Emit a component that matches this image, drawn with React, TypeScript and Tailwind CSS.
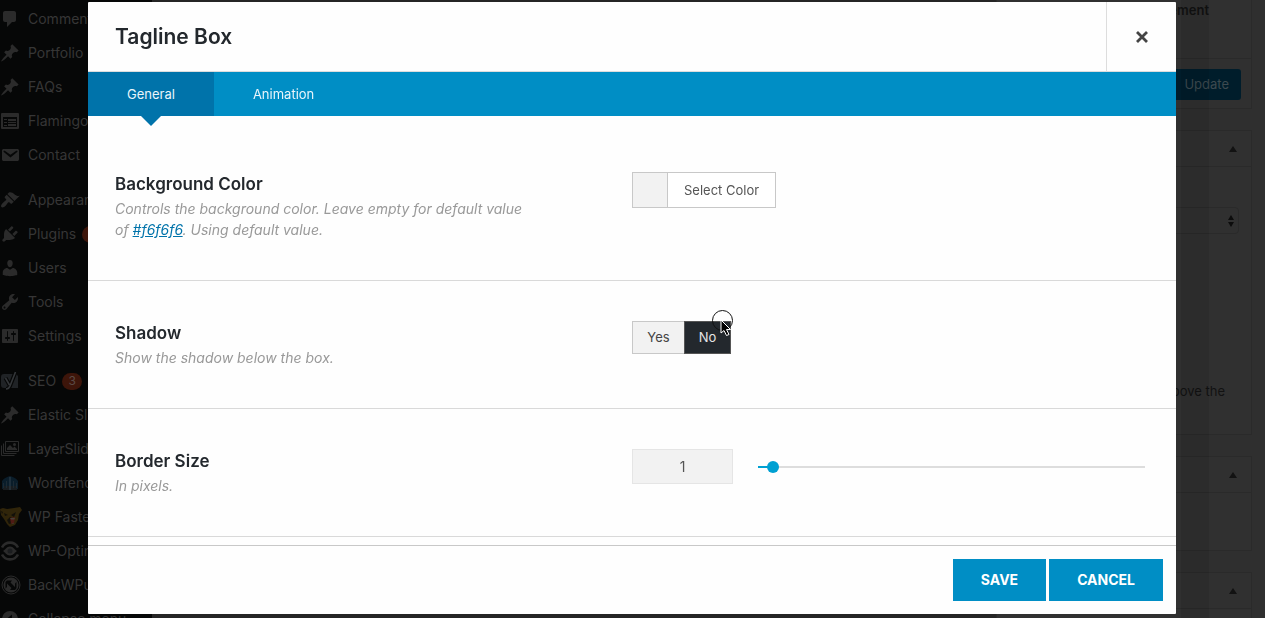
import { useState } from "react";
import type { ReactNode } from "react";
import clsx from "clsx";

const PIN =
  "M10.44 3.02l1.82-1.82 6.36 6.35-1.83 1.82c-1.05-.68-2.48-.57-3.41.36l-.75.75c-.92.93-1.04 2.35-.35 3.41l-1.83 1.82-2.41-2.41-2.8 2.79c-.42.42-3.38 2.71-3.8 2.29s1.86-3.39 2.28-3.81l2.79-2.79L4.1 9.36l1.83-1.82c1.05.69 2.48.57 3.4-.36l.75-.75c.93-.92 1.05-2.35.36-3.41z";

const pin = <path d={PIN} />;

type MenuItem = { label: string; icon: ReactNode; badge?: string };

const menuGroups: MenuItem[][] = [
  [
    {
      label: "Comments",
      icon: <path d="M5 2h9c1.1 0 2 .9 2 2v7c0 1.1-.9 2-2 2h-2l-5 5v-5H5c-1.1 0-2-.9-2-2V4c0-1.1.9-2 2-2z" />,
    },
    { label: "Portfolio", icon: pin },
    { label: "FAQs", icon: pin },
    {
      label: "Flamingo",
      icon: (
        <path
          fillRule="evenodd"
          d="M2 2h16a1 1 0 0 1 1 1v14a1 1 0 0 1-1 1H2a1 1 0 0 1-1-1V3a1 1 0 0 1 1-1zm1 4v10h14V6H3zm1 2h3v1H4V8zm4 0h8v2H8V8zm-4 3h3v1H4v-1zm4 0h8v1H8v-1zm-4 3h3v1H4v-1zm4-1h8v2H8v-2z"
        />
      ),
    },
    {
      label: "Contact",
      icon: (
        <path d="M3.87 4h13.25C18.37 4 19 4.59 19 5.79v8.42c0 1.19-.63 1.79-1.88 1.79H3.87c-1.25 0-1.88-.6-1.88-1.79V5.79c0-1.2.63-1.79 1.88-1.79zm6.62 8.6l6.74-5.53c.24-.2.43-.66.13-1.07-.29-.41-.82-.42-1.17-.17l-5.7 3.86L4.8 5.83c-.35-.25-.88-.24-1.17.17-.3.41-.11.87.13 1.07z" />
      ),
    },
  ],
  [
    {
      label: "Appearance",
      icon: (
        <path d="M14.48 11.06L7.41 3.99l1.5-1.5c.5-.56 2.3-.47 3.51.32 1.21.8 1.43 1.28 2.91 2.1 1.18.64 2.45 1.26 4.45.85zm-.71.71L6.7 4.7 4.93 6.47c-.39.39-.39 1.02 0 1.41l1.06 1.06c.39.39.39 1.03 0 1.42-.6.6-1.43 1.11-2.21 1.69-.35.26-.7.53-1.01.84C1.43 14.23.4 16.08 1.4 17.07c.99 1 2.84-.03 4.18-1.36.31-.31.58-.66.85-1.02.57-.78 1.08-1.61 1.69-2.21.39-.39 1.02-.39 1.41 0l1.06 1.06c.39.39 1.02.39 1.41 0z" />
      ),
    },
    {
      label: "Plugins",
      badge: "5",
      icon: (
        <path d="M13.11 4.36L9.87 7.6 8 5.73l3.24-3.24c.35-.34 1.05-.2 1.56.32.52.51.66 1.21.31 1.55zm-8 1.77l.91-1.12 9.01 9.01-1.19.84c-.71.71-2.63 1.16-3.82 1.16H6.14L4.9 17.26c-.59.59-1.54.59-2.12 0-.59-.58-.59-1.53 0-2.12l1.24-1.24v-3.88c0-1.13.4-3.19 1.09-3.89zm7.26 3.97l3.24-3.24c.34-.35 1.04-.21 1.55.31.52.51.66 1.21.31 1.55l-3.24 3.25z" />
      ),
    },
    {
      label: "Users",
      icon: (
        <path d="M10 9.25c-2.27 0-2.73-3.44-2.73-3.44C7 4.02 7.82 2 9.97 2c2.16 0 2.98 2.02 2.71 3.81 0 0-.41 3.44-2.68 3.44zm0 2.57L12.72 10c2.39 0 4.52 2.33 4.52 4.53v2.49s-3.65 1.13-7.24 1.13c-3.65 0-7.24-1.13-7.24-1.13v-2.49c0-2.25 1.94-4.48 4.47-4.48z" />
      ),
    },
    {
      label: "Tools",
      icon: (
        <path d="M16.68 9.77c-1.34 1.34-3.3 1.67-4.95.99l-5.41 6.52c-.99.99-2.59.99-3.58 0s-.99-2.59 0-3.57l6.52-5.42c-.68-1.65-.35-3.61.99-4.95 1.28-1.28 3.12-1.62 4.72-1.06l-2.89 2.89 2.82 2.82 2.86-2.87c.53 1.58.18 3.39-1.08 4.65zM3.81 16.21c.4.39 1.04.39 1.43 0 .4-.4.4-1.04 0-1.43-.39-.4-1.03-.4-1.43 0-.39.39-.39 1.03 0 1.43z" />
      ),
    },
    {
      label: "Settings",
      icon: (
        <path d="M18 16V4c0-.55-.45-1-1-1H3c-.55 0-1 .45-1 1v12c0 .55.45 1 1 1h14c.55 0 1-.45 1-1zM8 11h1c.55 0 1 .45 1 1s-.45 1-1 1H8v1.5c0 .28-.22.5-.5.5s-.5-.22-.5-.5V13H6c-.55 0-1-.45-1-1s.45-1 1-1h1V5.5c0-.28.22-.5.5-.5s.5.22.5.5V11zm5-2h-1c-.55 0-1-.45-1-1s.45-1 1-1h1V5.5c0-.28.22-.5.5-.5s.5.22.5.5V7h1c.55 0 1 .45 1 1s-.45 1-1 1h-1v5.5c0 .28-.22.5-.5.5s-.5-.22-.5-.5V9z" />
      ),
    },
  ],
  [
    {
      label: "SEO",
      badge: "3",
      icon: (
        <>
          <path fill="#202326" d="M4 3h12l2 2v12H4a3 3 0 0 1-3-3V6a3 3 0 0 1 3-3z" />
          <path fill="none" stroke="#060707" strokeWidth="4" d="M5.5 7l4 7M15.5 1L10 15c-.8 2-1.800 3-4 3" />
          <path fill="none" stroke="#34373a" strokeWidth="1.6" d="M5.5 7l4 7M15.5 1L10 15c-.8 2-1.800 3-4 3" />
        </>
      ),
    },
    { label: "Elastic Slider", icon: pin },
    {
      label: "LayerSlider WP",
      icon: (
        <>
          <path fill="none" stroke="currentColor" d="M5.5 2.5h13v10h-13zM3.5 4.5v10h13M1.5 6.5v10h13" />
          <path d="M7 11V9l3-3 3 3 1.5-1.5L17 10v1z" />
          <circle cx="14.5" cy="5.5" r="1.5" />
        </>
      ),
    },
    {
      label: "Wordfence",
      icon: (
        <>
          <path fill="#0a1d2a" d="M2 8c2-3 5-4 8-5 3 1 6 2 8 5v8H2z" />
          <path fill="#191d20" d="M3 13h14v4H3z" />
          <path fill="none" stroke="#1c2a33" d="M6.5 8v7M13.5 8v7M3.5 10v5M16.5 10v5" />
          <path fill="none" stroke="#33424c" d="M10 4v13" />
        </>
      ),
    },
    {
      label: "WP Fastest Cache",
      icon: (
        <>
          <path fill="#30250a" d="M0 2l3-1 4 1 7-1 6-1 2 3-3 4-1 6-3 5-5 2-3-3-3-5-3-4z" />
          <path fill="#12100a" d="M4 6l4 2-3 1zM11 8l5-3-2 5zM7 13l3-3 2 1v5l-3 1zM1 4l2 1-1 2z" />
          <path fill="#4f1a14" d="M10 11l5-1-1 6-3 1z" />
          <path fill="#45403a" d="M10 11h5l-1 2-1-1-1 1zM11 15l1 1h2l-1 1z" />
        </>
      ),
    },
    {
      label: "WP-Optimize",
      icon: (
        <>
          <path fill="none" stroke="currentColor" strokeWidth="2.6" d="M2 6.5a9 9 0 0 1 16 0M18 13.5a9 9 0 0 1-16 0" />
          <path d="M3 10c2-1 3.500-4.500 7-4.500S15 9 17 10c-2 1-3.500 4.500-7 4.500S5 11 3 10z" />
          <circle cx="10" cy="10" r="2.5" fill="#1b1d1f" />
        </>
      ),
    },
    {
      label: "BackWPup",
      icon: (
        <>
          <circle cx="11" cy="10" r="9" fill="none" stroke="currentColor" />
          <circle cx="11" cy="10" r="7.5" />
          <path fill="#060707" d="M7 5.500h5l-1.500 2 4.500 4.500V8.500l1.500-1.500v6l-1.500 2h-5l1.500-2L7 8.500V12l-1.500 1.500V7z" />
        </>
      ),
    },
    {
      label: "Collapse menu",
      icon: <path fillRule="evenodd" d="M10 2a8 8 0 1 1 0 16 8 8 0 0 1 0-16zm2 3.5L6.5 10l5.5 4.5z" />,
    },
  ],
];

function AdminMenu() {
  return (
    <nav className="flex w-38 shrink-0 flex-col gap-[11px] overflow-hidden bg-[#060707] pt-0.5 text-[#363636]">
      {menuGroups.map((group, i) => (
        <ul key={i}>
          {group.map((item) => (
            <li key={item.label}>
              <a href="#" className="flex h-[34px] items-center gap-2 whitespace-nowrap text-sm">
                <svg viewBox="0 0 20 20" className="size-5 shrink-0 overflow-visible text-[#2b2b2b]" fill="currentColor">
                  {item.icon}
                </svg>
                {item.label}
                {item.badge && (
                  <span className="-ml-0.5 flex h-[17px] w-5 items-center justify-center rounded-full bg-[#3d150a] text-xs text-[#5a4a45]">
                    {item.badge}
                  </span>
                )}
              </a>
            </li>
          ))}
        </ul>
      ))}
    </nav>
  );
}

function UpArrow() {
  return (
    <svg viewBox="0 0 8 6" className="h-1.5 w-2" fill="#121212">
      <path d="M4 0l4 6H0z" />
    </svg>
  );
}

function MetaBox({ className, children }: { className?: string; children?: ReactNode }) {
  return (
    <section className={clsx("border border-[#2a2a2a] bg-[#303030]", className)}>
      <div className="flex h-9 items-center justify-end border-b border-[#2a2a2a] px-3.5">
        <UpArrow />
      </div>
      {children}
    </section>
  );
}

function SideBoxes() {
  return (
    <div className="relative mr-[13px] flex w-64 shrink-0 flex-col gap-[21px] text-[13px] text-[#121212]">
      <section className="h-[109px] shrink-0 border border-t-0 border-[#2a2a2a] bg-[#303030]">
        <div className="h-[59px] border-b border-[#2a2a2a] pr-[42px] text-right font-semibold leading-5">Element</div>
        <div className="flex justify-end px-2.5 pt-2.5">
          <button className="h-[31px] rounded-[3px] bg-[#001d2b] px-3 text-[#3d4a50]">Update</button>
        </div>
      </section>
      <MetaBox className="h-[305px] shrink-0">
        <div className="flex flex-col items-end gap-[148px] px-3 pt-10">
          <div className="flex h-[27px] w-full items-center justify-end rounded-[4px] border border-[#2a2a2a] px-1">
            <svg viewBox="0 0 6 12" className="h-3 w-1.5" fill="#0c0c0c">
              <path d="M3 0l3 5H0zM3 12l3-5H0z" />
            </svg>
          </div>
          <p className="pr-3.5">shown above the</p>
        </div>
      </MetaBox>
      <MetaBox className="h-[95px] shrink-0" />
      <MetaBox className="h-[95px] shrink-0" />
      <div className="absolute inset-y-0 right-[43px] w-7 bg-black/8" />
    </div>
  );
}

function Option({ title, description, id, children }: { title: string; description: ReactNode; id: string; children: ReactNode }) {
  return (
    <div className="grid grid-cols-2 border-b border-[#d9d9d9] px-[27px] py-10">
      <div className="pr-26">
        <label htmlFor={id} className="block text-[17px] font-semibold leading-6 text-[#23282d]">
          {title}
        </label>
        <p className="mt-0.5 text-[14px] italic leading-[21px] text-[#999]">{description}</p>
      </div>
      <div>{children}</div>
    </div>
  );
}

function Pointer() {
  return (
    <svg viewBox="0 0 24 30" className="pointer-events-none absolute -right-1 -top-3.5 h-[30px] w-6">
      <circle cx="12.5" cy="12.5" r="10" fill="none" stroke="#111" />
      <path d="M11 12v13l3-2.500 2.500 5 2.500-1-2.500-5h4z" fill="#000" stroke="#fff" />
    </svg>
  );
}

function ShadowSwitch() {
  const [value, setValue] = useState("No");
  return (
    <div className="inline-flex h-[33px]">
      {["Yes", "No"].map((option) => (
        <label
          key={option}
          className={clsx(
            "relative flex cursor-pointer items-center justify-center border text-[13px]",
            value === option ? "border-[#555] bg-[#23282d] text-[#e5e5e5]" : "border-[#c8c8c8] bg-[#f2f2f2] text-[#444]",
            option === "Yes" ? "w-[52px] border-r-0" : "w-[47px]"
          )}
        >
          <input
            type="radio"
            name="shadow"
            id={option === "Yes" ? "shadow" : "shadow-no"}
            checked={value === option}
            onChange={() => setValue(option)}
            className="sr-only"
          />
          {option}
          {option === "No" && <Pointer />}
        </label>
      ))}
    </div>
  );
}

function BorderSize() {
  const [size, setSize] = useState(1);
  const max = 40;
  const fill = (size / max) * 100 + 1;
  return (
    <div className="flex items-center gap-[25px] pr-1">
      <input
        id="border-size"
        type="text"
        value={size}
        onChange={(e) => setSize(Number(e.target.value) || 0)}
        className="h-[35px] w-[101px] shrink-0 border border-[#e5e5e5] bg-[#f2f2f2] text-center text-sm text-[#555]"
      />
      <input
        type="range"
        aria-label="Border Size"
        min={0}
        max={max}
        value={size}
        onChange={(e) => setSize(Number(e.target.value))}
        style={{ backgroundImage: `linear-gradient(to right, #00a0d2 ${fill}%, #ddd ${fill}%)` }}
        className="h-0.5 min-w-0 flex-1 appearance-none [&::-webkit-slider-thumb]:size-3 [&::-webkit-slider-thumb]:appearance-none [&::-webkit-slider-thumb]:rounded-full [&::-webkit-slider-thumb]:bg-[#00a0d2]"
      />
    </div>
  );
}

function Modal() {
  const [tab, setTab] = useState("General");
  return (
    <div
      role="dialog"
      aria-labelledby="modal-title"
      className="fixed bottom-1 left-22 right-[89px] top-0.5 flex flex-col overflow-hidden rounded-[1px] bg-[#fefefe]"
    >
      <header className="flex h-[70px] shrink-0 items-stretch justify-between border-b border-[#ddd]">
        <h1 id="modal-title" className="flex items-center pl-[27px] text-[21px] font-semibold text-[#23282d]">
          Tagline Box
        </h1>
        <button aria-label="Close" className="flex w-[70px] items-center justify-center border-l border-[#ddd]">
          <svg viewBox="0 0 12 12" className="size-3" fill="none" stroke="#444" strokeWidth="2.8">
            <path d="M1 1l10 10M11 1L1 11" />
          </svg>
        </button>
      </header>
      <nav className="flex h-11 shrink-0 bg-[#008ec5]">
        {["General", "Animation"].map((name) => (
          <button
            key={name}
            onClick={() => setTab(name)}
            className={clsx("relative px-[39px] pt-0.5 text-[13px] text-[#e8f5fb]", tab === name && "bg-[#0073aa]")}
          >
            {name}
            {tab === name && (
              <svg viewBox="0 0 20 10" className="absolute left-1/2 top-full z-10 h-2.5 w-5 -translate-x-1/2" fill="#0073aa">
                <path d="M0 0h20L10 10z" />
              </svg>
            )}
          </button>
        ))}
      </nav>
      <div className="min-h-0 flex-1 overflow-hidden pt-4">
        <Option
          id="background-color"
          title="Background Color"
          description={
            <>
              Controls the background color. Leave empty for default value of{" "}
              <a href="#" className="text-[#0073aa] underline">
                #f6f6f6
              </a>
              . Using default value.
            </>
          }
        >
          <button id="background-color" className="flex h-9 items-stretch border border-[#c8c8c8] text-[13px] text-[#555]">
            <span className="w-[35px] border-r border-[#c8c8c8] bg-[#f2f2f2]" />
            <span className="flex items-center bg-white px-4 pt-0.5">Select Color</span>
          </button>
        </Option>
        <Option id="shadow" title="Shadow" description="Show the shadow below the box.">
          <ShadowSwitch />
        </Option>
        <Option id="border-size" title="Border Size" description="In pixels.">
          <BorderSize />
        </Option>
      </div>
      <footer className="flex shrink-0 justify-end gap-[3px] border-t border-[#c8c8c8] py-[13px] pr-[13px] text-sm font-bold text-white">
        <button className="h-[42px] bg-[#008ec5] px-7">SAVE</button>
        <button className="h-[42px] bg-[#008ec5] px-7">CANCEL</button>
      </footer>
    </div>
  );
}

export default function App() {
  return (
    <div className="flex h-screen overflow-hidden bg-[#2f2f2f] font-['Inter',sans-serif]">
      <AdminMenu />
      <div className="min-w-0 flex-1 bg-[#252525]" />
      <SideBoxes />
      <Modal />
    </div>
  );
}
